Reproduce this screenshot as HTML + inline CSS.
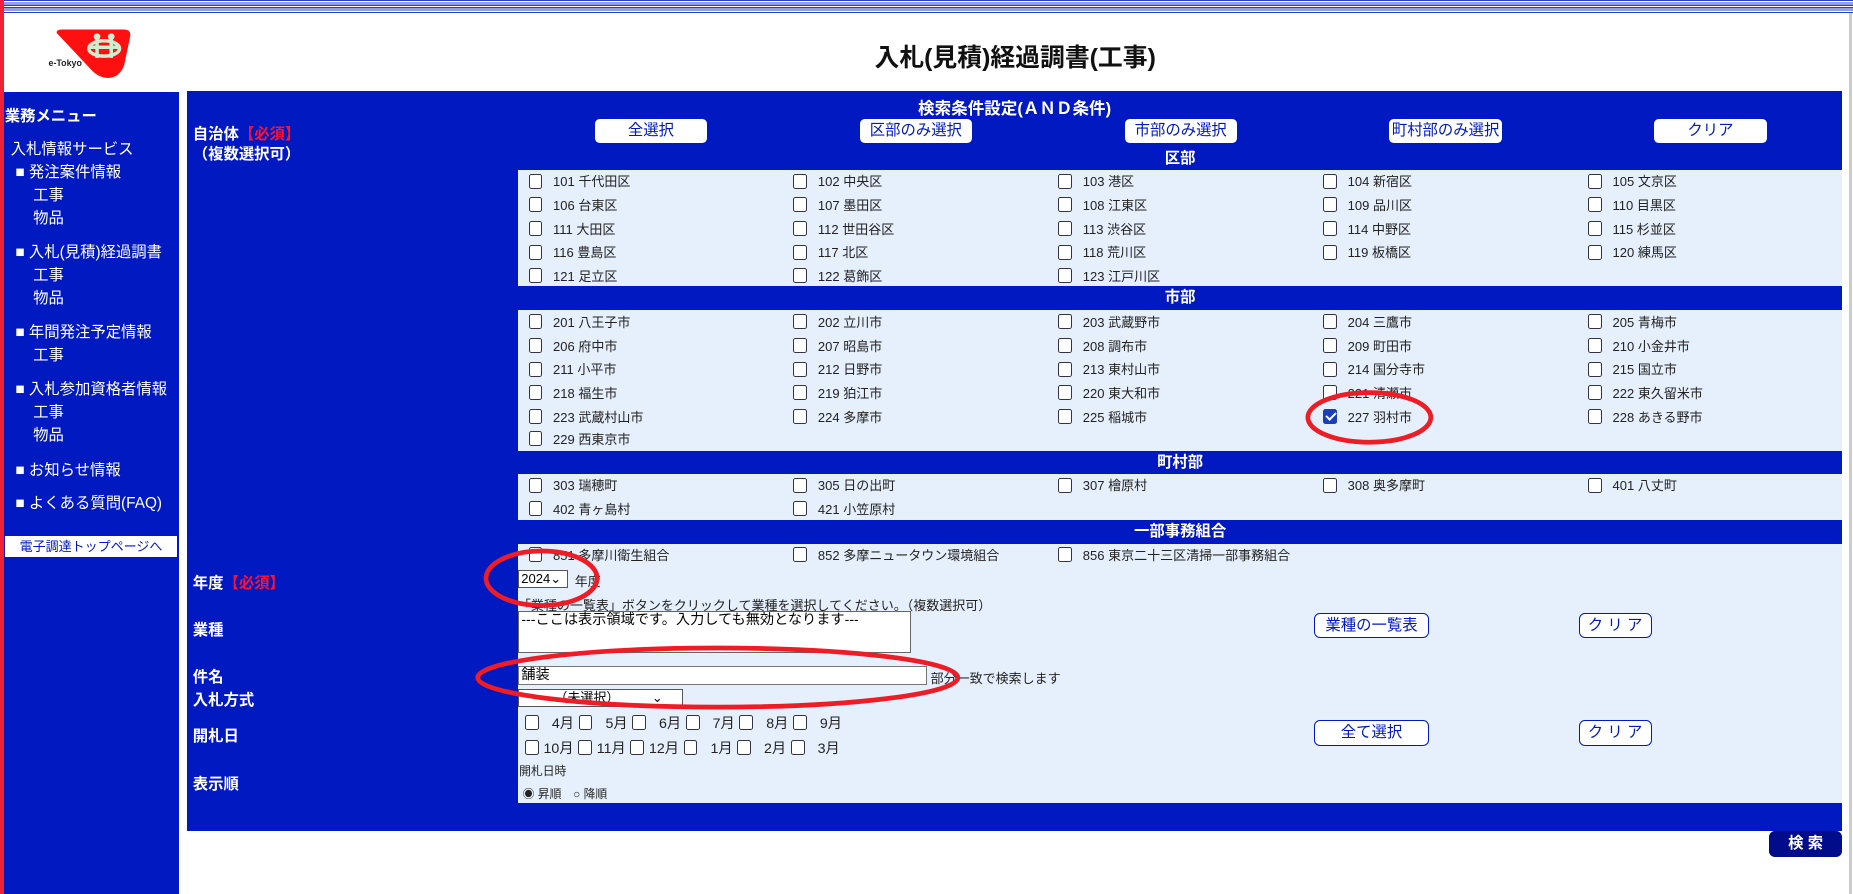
<!DOCTYPE html>
<html><head><meta charset="utf-8">
<style>
html,body{margin:0;padding:0;background:#fff;overflow:hidden}
#w{position:relative;width:1567px;height:756px;zoom:1.1825;font-family:"Liberation Sans","Noto Sans CJK JP",sans-serif;overflow:hidden}
.a{position:absolute}
.dk{background:#0019c0}
.lt{background:#e6f0fc}
.wh{color:#fff;font-weight:bold;font-size:13px}
.btn{position:absolute;background:#fff;border-radius:4px;color:#0019c0;font-size:13px;text-align:center;line-height:20px;height:20px}
.ob{position:absolute;background:#fff;border:1px solid #0019c0;border-radius:5px;color:#0019c0;font-size:13px;text-align:center;line-height:20px;height:20px}
.hd{position:absolute;left:438px;width:1120px;height:19px;line-height:19px;text-align:center;color:#fff;font-weight:bold;font-size:13px;background:#0019c0}
.row{position:absolute;left:447px;height:20px;display:grid;grid-template-columns:repeat(5,224px);font-size:11px;color:#222;line-height:20px}
.cb{display:inline-block;width:10px;height:11px;border:1px solid #334;border-radius:2px;background:#fff;vertical-align:-2px;margin-right:9px}
.ck{background:#1a3fb8;border-color:#1a3fb8;position:relative}
.ck:after{content:"";position:absolute;left:3px;top:0px;width:3px;height:7px;border:solid #fff;border-width:0 2px 2px 0;transform:rotate(45deg)}
.lbl{position:absolute;left:163px;color:#fff;font-weight:bold;font-size:13px}
.red{color:#ff1030}
.sm{position:absolute;font-size:11px;color:#222}
.menu{position:absolute;color:#fff;font-size:13px}
</style></head><body>
<div id="w">
<div class="a" style="left:0;top:0;width:3px;height:756px;background:#ee2233"></div>
<div class="a" style="left:3px;top:0;width:1564px;height:11px;background:repeating-linear-gradient(#2a3ec8 0 1px,#fff 1px 2px)"></div>
<div class="a" style="left:1564px;top:11px;width:2px;height:745px;background:#ccc"></div>
<!-- logo -->
<svg class="a" style="left:38px;top:22px" width="75" height="46" viewBox="0 0 75 46">
<path d="M10 6 Q9 3 15 3 L67 3 Q73 3 72 9 L67 33 Q63 44 53 44 Q46 44 40 38 Z" fill="#ff1010"/>
<ellipse cx="50" cy="19" rx="13" ry="6.5" fill="none" stroke="#cfeecf" stroke-width="3"/>
<circle cx="44" cy="9" r="2.8" fill="#cfeecf"/><circle cx="56" cy="9" r="2.8" fill="#cfeecf"/>
<path d="M44 11v16M56 11v16M38 18h24" stroke="#cfeecf" stroke-width="3"/>
<text x="3" y="34" font-size="7.5" font-weight="bold" font-family="Liberation Sans" fill="#222">e-Tokyo</text>
</svg>
<div class="a" style="left:0;width:1567px;top:32px;text-align:center;padding-left:150px;box-sizing:border-box;font-size:21px;font-weight:bold;color:#111">入札(見積)経過調書(工事)</div>
<!-- sidebar -->
<div class="a dk" style="left:3px;top:78px;width:148px;height:678px"></div>
<div class="menu" style="left:4px;top:88px;font-weight:bold">業務メニュー</div>
<div class="menu" style="left:9px;top:116px">入札情報サービス</div>
<div class="menu" style="left:13px;top:135px">■ 発注案件情報</div>
<div class="menu" style="left:28px;top:155px">工事</div>
<div class="menu" style="left:28px;top:174px">物品</div>
<div class="menu" style="left:13px;top:203px">■ 入札(見積)経過調書</div>
<div class="menu" style="left:28px;top:222px">工事</div>
<div class="menu" style="left:28px;top:242px">物品</div>
<div class="menu" style="left:13px;top:271px">■ 年間発注予定情報</div>
<div class="menu" style="left:28px;top:290px">工事</div>
<div class="menu" style="left:13px;top:319px">■ 入札参加資格者情報</div>
<div class="menu" style="left:28px;top:338px">工事</div>
<div class="menu" style="left:28px;top:358px">物品</div>
<div class="menu" style="left:13px;top:387px">■ お知らせ情報</div>
<div class="menu" style="left:13px;top:415px">■ よくある質問(FAQ)</div>
<div class="a" style="left:4px;top:453px;width:146px;height:18px;background:#fff;color:#0019c0;font-size:11px;text-align:center;line-height:18px">電子調達トップページへ</div>
<!-- main -->
<div class="a dk" style="left:158px;top:77px;width:1400px;height:626px"></div>
<div class="a wh" style="left:158px;width:1400px;top:80px;text-align:center;font-size:14px">検索条件設定(ＡＮＤ条件)</div>
<div class="lbl" style="top:103px">自治体<span class="red">【必須】</span></div>
<div class="lbl" style="top:120px">（複数選択可）</div>
<div class="btn" style="left:503px;top:101px;width:95px">全選択</div>
<div class="btn" style="left:727px;top:101px;width:95px">区部のみ選択</div>
<div class="btn" style="left:951px;top:101px;width:95px">市部のみ選択</div>
<div class="btn" style="left:1175px;top:101px;width:95px">町村部のみ選択</div>
<div class="btn" style="left:1399px;top:101px;width:95px">クリア</div>
<div class="hd" style="top:125px">区部</div>
<div class="a lt" style="left:438px;top:144px;width:1120px;height:98px"></div>
<div class="row" style="top:144px"><div><span class="cb"></span>101 千代田区</div><div><span class="cb"></span>102 中央区</div><div><span class="cb"></span>103 港区</div><div><span class="cb"></span>104 新宿区</div><div><span class="cb"></span>105 文京区</div></div>
<div class="row" style="top:164px"><div><span class="cb"></span>106 台東区</div><div><span class="cb"></span>107 墨田区</div><div><span class="cb"></span>108 江東区</div><div><span class="cb"></span>109 品川区</div><div><span class="cb"></span>110 目黒区</div></div>
<div class="row" style="top:184px"><div><span class="cb"></span>111 大田区</div><div><span class="cb"></span>112 世田谷区</div><div><span class="cb"></span>113 渋谷区</div><div><span class="cb"></span>114 中野区</div><div><span class="cb"></span>115 杉並区</div></div>
<div class="row" style="top:204px"><div><span class="cb"></span>116 豊島区</div><div><span class="cb"></span>117 北区</div><div><span class="cb"></span>118 荒川区</div><div><span class="cb"></span>119 板橋区</div><div><span class="cb"></span>120 練馬区</div></div>
<div class="row" style="top:224px"><div><span class="cb"></span>121 足立区</div><div><span class="cb"></span>122 葛飾区</div><div><span class="cb"></span>123 江戸川区</div></div>
<div class="hd" style="top:243px">市部</div>
<div class="a lt" style="left:438px;top:262px;width:1120px;height:119px"></div>
<div class="row" style="top:263px"><div><span class="cb"></span>201 八王子市</div><div><span class="cb"></span>202 立川市</div><div><span class="cb"></span>203 武蔵野市</div><div><span class="cb"></span>204 三鷹市</div><div><span class="cb"></span>205 青梅市</div></div>
<div class="row" style="top:283px"><div><span class="cb"></span>206 府中市</div><div><span class="cb"></span>207 昭島市</div><div><span class="cb"></span>208 調布市</div><div><span class="cb"></span>209 町田市</div><div><span class="cb"></span>210 小金井市</div></div>
<div class="row" style="top:303px"><div><span class="cb"></span>211 小平市</div><div><span class="cb"></span>212 日野市</div><div><span class="cb"></span>213 東村山市</div><div><span class="cb"></span>214 国分寺市</div><div><span class="cb"></span>215 国立市</div></div>
<div class="row" style="top:323px"><div><span class="cb"></span>218 福生市</div><div><span class="cb"></span>219 狛江市</div><div><span class="cb"></span>220 東大和市</div><div><span class="cb"></span>221 清瀬市</div><div><span class="cb"></span>222 東久留米市</div></div>
<div class="row" style="top:343px"><div><span class="cb"></span>223 武蔵村山市</div><div><span class="cb"></span>224 多摩市</div><div><span class="cb"></span>225 稲城市</div><div><span class="cb ck"></span>227 羽村市</div><div><span class="cb"></span>228 あきる野市</div></div>
<div class="row" style="top:362px"><div><span class="cb"></span>229 西東京市</div></div>
<div class="hd" style="top:382px">町村部</div>
<div class="a lt" style="left:438px;top:401px;width:1120px;height:39px"></div>
<div class="row" style="top:401px"><div><span class="cb"></span>303 瑞穂町</div><div><span class="cb"></span>305 日の出町</div><div><span class="cb"></span>307 檜原村</div><div><span class="cb"></span>308 奥多摩町</div><div><span class="cb"></span>401 八丈町</div></div>
<div class="row" style="top:421px"><div><span class="cb"></span>402 青ヶ島村</div><div><span class="cb"></span>421 小笠原村</div></div>
<div class="hd" style="top:441px">一部事務組合</div>
<div class="a lt" style="left:438px;top:460px;width:1120px;height:219px"></div>
<div class="row" style="top:460px"><div><span class="cb"></span>851 多摩川衛生組合</div><div><span class="cb"></span>852 多摩ニュータウン環境組合</div><div><span class="cb"></span>856 東京二十三区清掃一部事務組合</div></div>
<div class="lbl" style="top:483px">年度<span class="red">【必須】</span></div>
<div class="a" style="left:438px;top:482px;width:42px;height:15px;border:1px solid #555;background:#fff;font-size:11px;line-height:13px;box-sizing:border-box;padding-left:2px">2024⌄</div>
<div class="sm" style="left:486px;top:483px">年度</div>
<div class="sm" style="left:438px;top:503px">「業種の一覧表」ボタンをクリックして業種を選択してください。（複数選択可）</div>
<div class="lbl" style="top:523px">業種</div>
<div class="a" style="left:438px;top:517px;width:332px;height:35px;border:1px solid #666;background:#fff;box-sizing:border-box;font-size:12px;padding:0 2px;line-height:14px">---ここは表示領域です。入力しても無効となります---</div>
<div class="ob" style="left:1111px;top:518px;width:96px">業種の一覧表</div>
<div class="ob" style="left:1335px;top:518px;width:60px">ク リ ア</div>
<div class="lbl" style="top:562px">件名</div>
<div class="a" style="left:438px;top:563px;width:346px;height:16px;border:1px solid #777;background:#fff;box-sizing:border-box;font-size:12px;line-height:14px;padding-left:2px">舗装</div>
<div class="sm" style="left:787px;top:565px">部分一致で検索します</div>
<div class="lbl" style="top:582px">入札方式</div>
<div class="a" style="left:438px;top:583px;width:140px;height:15px;border:1px solid #555;background:#fff;box-sizing:border-box;font-size:11px;line-height:13px;padding-left:30px">（未選択）　　　⌄</div>
<div class="lbl" style="top:612px">開札日</div>
<div class="a" style="left:444px;top:602px;font-size:12px;line-height:21px;color:#222;word-spacing:0">
<div><span class="cb" style="margin-right:11px"></span>4月<span class="cb" style="margin:0 11px 0 4px"></span>5月<span class="cb" style="margin:0 11px 0 4px"></span>6月<span class="cb" style="margin:0 11px 0 4px"></span>7月<span class="cb" style="margin:0 11px 0 4px"></span>8月<span class="cb" style="margin:0 11px 0 4px"></span>9月</div>
<div><span class="cb" style="margin-right:4px"></span>10月<span class="cb" style="margin:0 4px 0 4px"></span>11月<span class="cb" style="margin:0 4px 0 4px"></span>12月<span class="cb" style="margin:0 11px 0 4px"></span>1月<span class="cb" style="margin:0 11px 0 4px"></span>2月<span class="cb" style="margin:0 11px 0 4px"></span>3月</div>
</div>
<div class="ob" style="left:1111px;top:609px;width:96px">全て選択</div>
<div class="ob" style="left:1335px;top:609px;width:60px">ク リ ア</div>
<div class="lbl" style="top:653px">表示順</div>
<div class="sm" style="left:439px;top:644px;font-size:10px">開札日時</div>
<div class="sm" style="left:442px;top:664px;font-size:10px">◉ 昇順　○ 降順</div>
<div class="a" style="left:1496px;top:703px;width:62px;height:22px;background:#000c8a;border-radius:5px;color:#fff;font-weight:bold;font-size:13px;text-align:center;line-height:22px">検 索</div>
<!-- red annotations -->
<svg class="a" style="left:0;top:0" width="1567" height="756">
<g fill="none" stroke="#ee1c25" stroke-width="4">
<ellipse cx="1158" cy="353" rx="52" ry="21"/>
<ellipse cx="458" cy="489" rx="47" ry="23"/>
<ellipse cx="607" cy="573" rx="203" ry="25"/>
</g></svg>
</div>
</body></html>
